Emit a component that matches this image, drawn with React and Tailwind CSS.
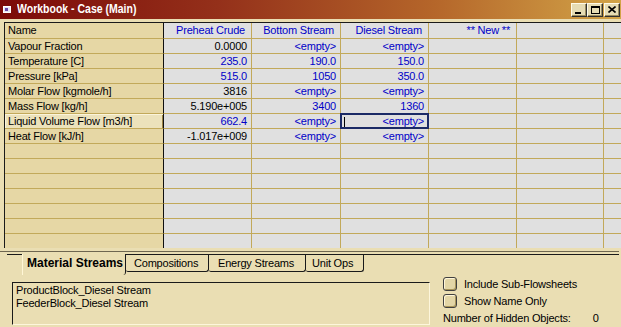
import React from "react";

const B = "text-[#0000c8]";
const K = "text-black";

const rows = [
  ["Vapour Fraction", [["0.0000", K], ["<empty>", B], ["<empty>", B]]],
  ["Temperature [C]", [["235.0", B], ["190.0", B], ["150.0", B]]],
  ["Pressure [kPa]", [["515.0", B], ["1050", B], ["350.0", B]]],
  ["Molar Flow [kgmole/h]", [["3816", K], ["<empty>", B], ["<empty>", B]]],
  ["Mass Flow [kg/h]", [["5.190e+005", K], ["3400", B], ["1360", B]]],
  ["Liquid Volume Flow [m3/h]", [["662.4", B], ["<empty>", B], ["<empty>", B, true]], true],
  ["Heat Flow [kJ/h]", [["-1.017e+009", K], ["<empty>", B], ["<empty>", B]]],
];

const dataW = ["w-[88px]", "w-[89px]", "w-[88px]", "w-[88px]", "w-[87px]"];

function Row({ name, vals = [], header = false, hl = false }) {
  return (
    <div className={`flex shrink-0 ${header ? "h-[16px]" : "h-[15px]"}`}>
      <div
        className={`w-[159px] shrink-0 border-r border-r-[#101010] border-b border-b-[#c2a95a] pl-[3px] leading-[14px] ${
          hl
            ? "bg-[#ece2bb] shadow-[inset_1px_1px_0_#fbf4da,inset_-1px_0_0_#9c8446]"
            : "bg-[#e6d7a5]"
        }`}
      >
        {name}
      </div>
      {dataW.map((w, i) => {
        const v = vals[i];
        return (
          <div
            key={i}
            className={`${w} shrink-0 relative bg-[#e0e0e0] border-r border-b border-[#c2a95a] text-right leading-[14px] ${
              header ? "pr-[6px] text-[#0000c8]" : "pr-[4px]"
            } ${v ? v[1] : ""}`}
          >
            {v && v[2] ? (
              <div className="absolute inset-[-1px] border-2 border-[#1b2a66] pr-[3px] leading-[12px]">
                <div className="absolute left-[2px] top-[2px] h-[10px] w-[1px] bg-black" />
                {v[0]}
              </div>
            ) : v ? (
              v[0]
            ) : null}
          </div>
        );
      })}
      <div className="flex-1 bg-[#e0e0e0] border-b border-[#c2a95a]" />
    </div>
  );
}

function TitleButton({ children, className = "" }) {
  return (
    <div
      className={`w-[16px] h-[14px] bg-[#e6dcb4] border border-t-[#fffbe8] border-l-[#fffbe8] border-r-[#303030] border-b-[#303030] shadow-[inset_-1px_-1px_0_#9a8c60] flex items-center justify-center ${className}`}
    >
      {children}
    </div>
  );
}

function Check() {
  return (
    <div className="w-[14px] h-[14px] rounded-[3px] border border-[#404040] bg-[#e3d6a6] shadow-[inset_1px_1px_0_#fff6d8,inset_-1px_-1px_0_#a8955a]" />
  );
}

export default function App() {
  return (
    <div className="w-[621px] h-[327px] overflow-hidden bg-[#eadeb3] font-['Liberation_Sans',Arial,sans-serif] text-[11px] tracking-[-0.2px] text-black flex flex-col">
      {/* Title bar */}
      <div className="h-[19px] shrink-0 flex items-center bg-[linear-gradient(90deg,#7c0a08_0%,#94301a_35%,#b5662a_70%,#d2a448_100%)]">
        <svg width="10" height="9" viewBox="0 0 10 9" className="ml-[3px] mr-[4px] shrink-0">
          <rect x="0.5" y="1.5" width="7" height="6" fill="#e8e4f4" stroke="#ffffff" />
          <rect x="2" y="3" width="3" height="3" fill="#6a4aa8" />
        </svg>
        <span className="text-white font-bold text-[12.5px] tracking-[0px] leading-none origin-left scale-x-[0.84] whitespace-nowrap">
          Workbook - Case (Main)
        </span>
        <div className="ml-auto flex items-center mr-[1px]">
          <TitleButton>
            <div className="w-[6px] h-[2px] bg-black mt-[6px] mr-[2px]" />
          </TitleButton>
          <TitleButton>
            <div className="w-[9px] h-[8px] border border-black border-t-2" />
          </TitleButton>
          <TitleButton className="ml-[1px]">
            <svg width="8" height="7" viewBox="0 0 8 7">
              <path d="M0.5 0.5 L7.5 6.5 M7.5 0.5 L0.5 6.5" stroke="black" strokeWidth="1.6" />
            </svg>
          </TitleButton>
        </div>
      </div>

      {/* Grid */}
      <div className="mt-[3px] ml-[4px] h-[226px] shrink-0 overflow-hidden border-t border-l border-[#1a1a1a] flex flex-col">
        <Row
          header
          name="Name"
          vals={[
            ["Preheat Crude", B],
            ["Bottom Stream", B],
            ["Diesel Stream", B],
            ["** New **", B],
          ]}
        />
        {rows.map(([n, v, hl]) => (
          <Row key={n} name={n} vals={v} hl={hl} />
        ))}
        {Array.from({ length: 7 }).map((_, i) => (
          <Row key={"e" + i} name="" />
        ))}
      </div>

      {/* Tab strip */}
      <div className="mt-[3px] h-[1px] mr-[2px] bg-[#6e6650] shrink-0" />
      <div className="h-[2px] shrink-0" />
      <div className="relative shrink-0 h-[21px] ml-[7px] mr-[2px] border-t border-[#1a1a1a] flex items-start">
        <div className="w-[15px]" />
        <div className="-mt-[1px] h-[21px] w-[104px] bg-[#eadeb3] border-l border-l-[#fff6d6] border-r border-r-[#1a1a1a] rounded-br-[3px] font-bold text-[12px] tracking-[0px] pl-[4px] leading-[19px]">
          Material Streams
        </div>
        <div className="h-[17px] w-[83px] border-r border-b border-[#1a1a1a] rounded-br-[3px] rounded-bl-[2px] pl-[8px] leading-[16px]">
          Compositions
        </div>
        <div className="h-[17px] w-[97px] border-r border-b border-[#1a1a1a] rounded-br-[3px] rounded-bl-[2px] pl-[9px] leading-[16px]">
          Energy Streams
        </div>
        <div className="h-[17px] w-[58px] border-r border-b border-[#1a1a1a] rounded-br-[3px] rounded-bl-[2px] pl-[6px] leading-[16px]">
          Unit Ops
        </div>
      </div>

      {/* Bottom panel */}
      <div className="flex mt-[7px]">
        <div className="ml-[12px] w-[418px] h-[43px] border-t border-l border-t-[#1a1a1a] border-l-[#1a1a1a] border-r border-b border-r-[#fdf6dc] border-b-[#fdf6dc] pl-[3px] pt-[1px] leading-[13px]">
          <div>ProductBlock_Diesel Stream</div>
          <div>FeederBlock_Diesel Stream</div>
        </div>
        <div className="ml-[13px] -mt-[6px] flex flex-col">
          <div className="flex items-center h-[16px]">
            <Check />
            <span className="ml-[7px]">Include Sub-Flowsheets</span>
          </div>
          <div className="flex items-center h-[16px] mt-[1px]">
            <Check />
            <span className="ml-[7px]">Show Name Only</span>
          </div>
          <div className="flex items-center h-[16px] mt-[1px]">
            <span>Number of Hidden Objects:</span>
            <span className="ml-[22px]">0</span>
          </div>
        </div>
      </div>
    </div>
  );
}
